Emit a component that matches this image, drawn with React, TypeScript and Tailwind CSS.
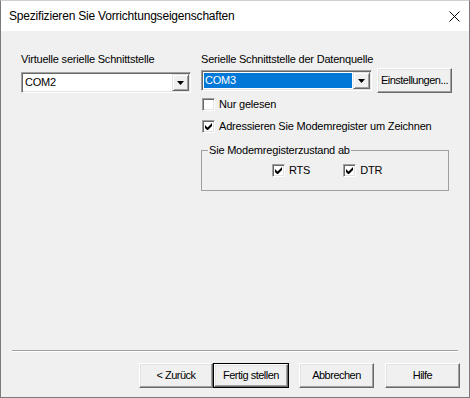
import React from "react";

const ui = "font-['Liberation_Sans',Arial,sans-serif] text-[11px] leading-[13px] tracking-[-0.2px] text-black";

function Arrow() {
  return (
    <svg width="7" height="4" viewBox="0 0 7 4" className="block">
      <path d="M0 0h7L3.5 4z" fill="#000" />
    </svg>
  );
}

function Combo({ value, selected, width }: { value: string; selected?: boolean; width: string }) {
  return (
    <div
      className={`${width} flex h-[21px] border border-t-[#a0a0a0] border-l-[#a0a0a0] border-r-white border-b-white bg-white p-px shadow-[inset_1px_1px_0_#696969,inset_-1px_-1px_0_#e3e3e3]`}
    >
      <div className="flex flex-1 items-stretch p-px">
        <span className={`flex flex-1 items-center pl-px ${selected ? "bg-[#0078d7] text-white" : ""}`}>{value}</span>
      </div>
      <div className="flex w-[17px] items-center justify-center border border-t-[#e3e3e3] border-l-[#e3e3e3] border-r-[#696969] border-b-[#696969] bg-[#f0f0f0] shadow-[inset_1px_1px_0_#fff,inset_-1px_-1px_0_#a0a0a0]">
        <Arrow />
      </div>
    </div>
  );
}

function Check({ checked, label }: { checked?: boolean; label: string }) {
  return (
    <label className="flex items-center gap-[4px]">
      <span className="flex h-[13px] w-[13px] items-center justify-center border border-t-[#a0a0a0] border-l-[#a0a0a0] border-r-white border-b-white bg-white shadow-[inset_1px_1px_0_#696969,inset_-1px_-1px_0_#e3e3e3]">
        {checked && (
          <svg width="7" height="7" viewBox="0 0 7 7" className="block">
            <path d="M0 2v3l2 2h1l4-4V0L2.5 4.5z" fill="#000" />
          </svg>
        )}
      </span>
      <span>{label}</span>
    </label>
  );
}

function Btn({ children, def, w }: { children: React.ReactNode; def?: boolean; w: string }) {
  return (
    <button
      className={`${w} flex h-[25px] items-center justify-center ${def ? "border border-[#000]" : ""}`}
    >
      <span className="flex h-full w-full items-center justify-center border border-t-white border-l-white border-r-[#696969] border-b-[#696969] bg-[#f0f0f0] tracking-[-0.5px] shadow-[inset_-1px_-1px_0_#a0a0a0,inset_1px_1px_0_#e3e3e3]">
        {children}
      </span>
    </button>
  );
}

export default function App() {
  return (
    <div className={`${ui} flex h-[398px] w-[470px] flex-col border border-[#7a7a7a] border-t-[#d0d0d0] bg-[#f0f0f0]`}>
      <div className="flex h-[30px] shrink-0 items-center justify-between bg-white pl-[8px] pr-[9px]">
        <span className="pt-[1px] text-[12px] tracking-[-0.2px] text-black">Spezifizieren Sie Vorrichtungseigenschaften</span>
        <svg width="11" height="11" viewBox="0 0 11 11" className="block">
          <path d="M0.5 0.5l10 10M10.5 0.5l-10 10" stroke="#000" strokeWidth="1" />
        </svg>
      </div>

      <div className="flex pl-[20px] pt-[22px]">
        <div className="w-[170px]">
          <div>Virtuelle serielle Schnittstelle</div>
          <div className="mt-[6px]">
            <Combo value="COM2" width="w-[170px]" />
          </div>
        </div>

        <div className="ml-[10px] w-[252px]">
          <div>Serielle Schnittstelle der Datenquelle</div>
          <div className="mt-[2px] flex items-center gap-[5px]">
            <Combo value="COM3" selected width="w-[171px]" />
            <Btn w="w-[75px]">Einstellungen...</Btn>
          </div>
          <div className="mt-[5px] flex flex-col gap-[9px] pl-px">
            <Check label="Nur gelesen" />
            <Check checked label="Adressieren Sie Modemregister um Zeichnen" />
          </div>
          <fieldset className="mt-[11px] h-[47px] w-[248px] border border-[#a0a0a0] px-[6px]">
            <legend className="px-px">Sie Modemregisterzustand ab</legend>
            <div className="mt-[7px] flex gap-[33px] pl-[64px]">
              <Check checked label="RTS" />
              <Check checked label="DTR" />
            </div>
          </fieldset>
        </div>
      </div>

      <div className="flex-1" />

      <div className="mx-[11px] border-t border-b border-t-[#a0a0a0] border-b-white" />

      <div className="mb-[9px] mt-[11px] flex justify-end pr-[9px]">
        <Btn w="w-[74px]">&lt; Zurück</Btn>
        <Btn def w="w-[76px]">Fertig stellen</Btn>
        <div className="w-[10px]" />
        <Btn w="w-[75px]">Abbrechen</Btn>
        <div className="w-[11px]" />
        <Btn w="w-[75px]">Hilfe</Btn>
      </div>
    </div>
  );
}
